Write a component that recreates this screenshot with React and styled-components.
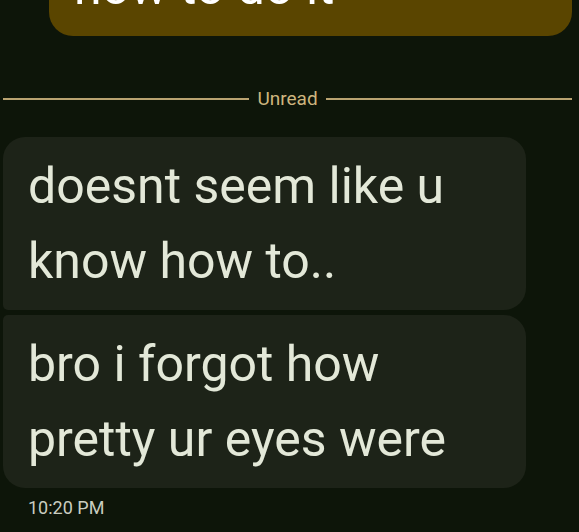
import React from 'react';
import styled, { createGlobalStyle } from 'styled-components';

const Global = createGlobalStyle`
  html, body {
    margin: 0;
    padding: 0;
    background: #0d1509;
    overflow: hidden;
  }
  body {
    font-family: Roboto, "Liberation Sans", sans-serif;
  }
`;

const Screen = styled.div`
  width: 579px;
  height: 532px;
  overflow: hidden;
  background: #0d1509;
  display: flex;
  flex-direction: column;
  padding: 0 7px 0 3px;
  box-sizing: border-box;
`;

const Bubble = styled.div`
  box-sizing: border-box;
  max-width: 523px;
  width: ${(p) => (p.$wide ? '523px' : 'auto')};
  align-self: ${(p) => (p.$out ? 'flex-end' : 'flex-start')};
  background: ${(p) => (p.$out ? '#5a4500' : '#1d2318')};
  color: ${(p) => (p.$out ? '#ffffff' : '#e3e8d8')};
  font-size: 50px;
  line-height: 75px;
  padding: 12px 22px 11px 25px;
  border-radius: ${(p) => p.$radius};
  margin-top: ${(p) => p.$top || '0'};
`;

const Divider = styled.div`
  display: flex;
  align-items: center;
  gap: 8px;
  margin: 51px 0 26px;
  color: #cdb57e;
  font-size: 19px;
  line-height: 24px;
`;

const Rule = styled.div`
  flex: 1;
  height: 2px;
  background: #b9a371;
`;

const Time = styled.div`
  color: #c9cdc0;
  font-size: 18px;
  line-height: 22px;
  padding: 9px 0 0 25px;
`;

export default function App() {
  return (
    <>
      <Global />
      <Screen>
        <Bubble $out $wide $top="-62px" $radius="24px">
          how to do it
        </Bubble>
        <Divider>
          <Rule />
          <span>Unread</span>
          <Rule />
        </Divider>
        <Bubble $radius="22px 22px 22px 5px">doesnt seem like u know how to..</Bubble>
        <Bubble $top="5px" $radius="5px 22px 22px 22px">bro i forgot how pretty ur eyes were</Bubble>
        <Time>10:20 PM</Time>
      </Screen>
    </>
  );
}
